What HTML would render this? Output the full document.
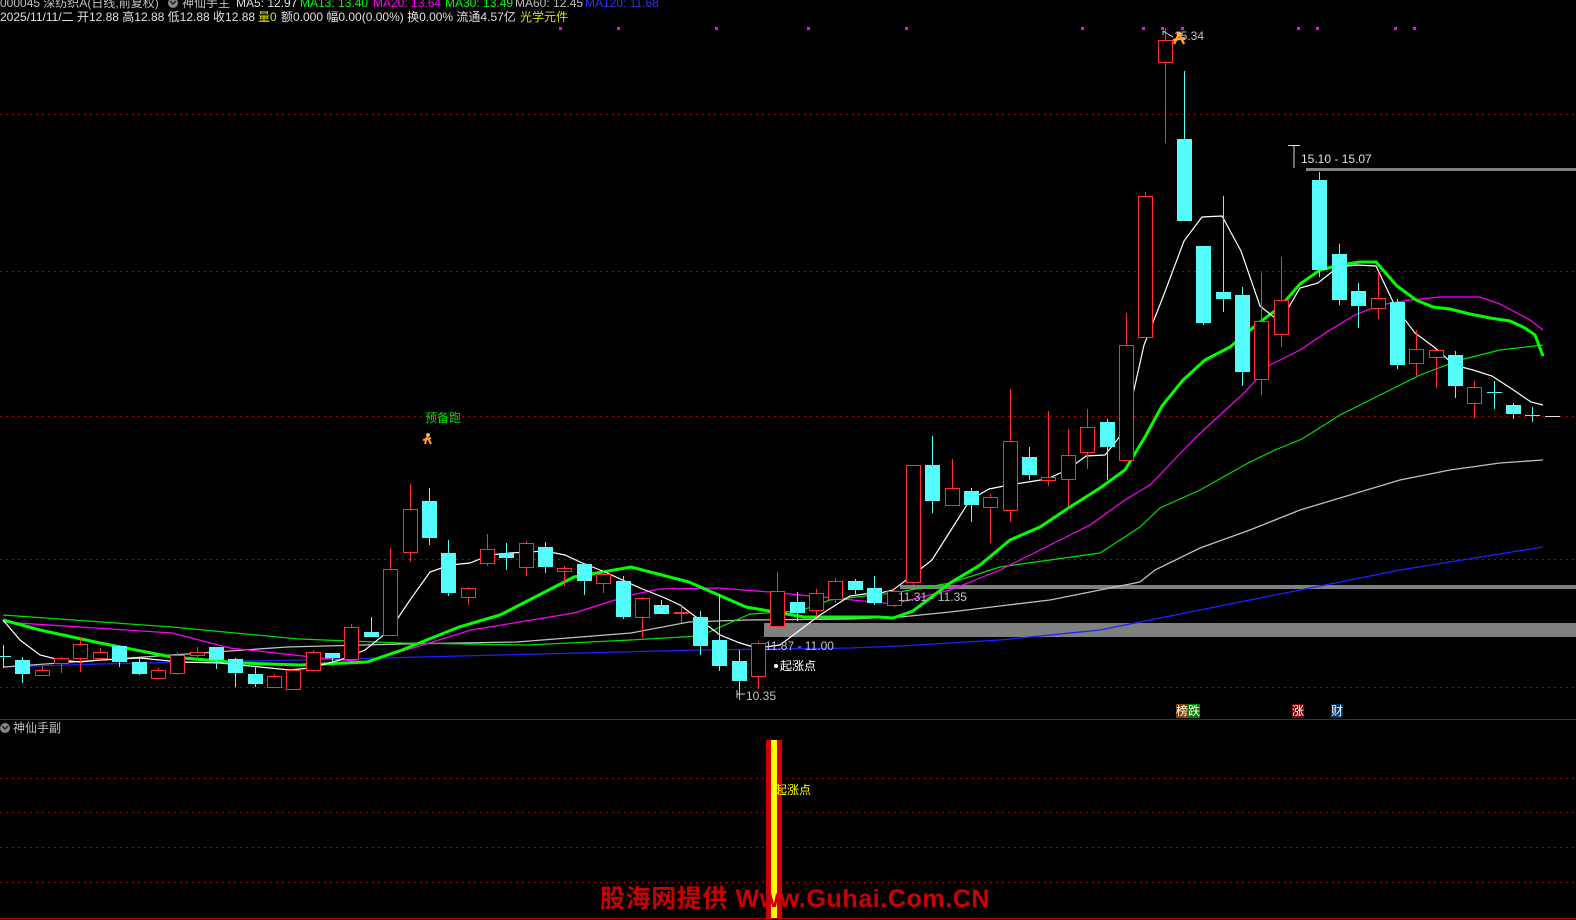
<!DOCTYPE html>
<html><head><meta charset="utf-8">
<style>
html,body{margin:0;padding:0;background:#000;width:1576px;height:920px;overflow:hidden}
body{position:relative;font-family:"Liberation Sans","Noto Sans CJK SC",sans-serif;font-size:12px}
.t{position:absolute;white-space:nowrap;line-height:14px}
svg{position:absolute;left:0;top:0}
</style></head><body>
<svg id="s" width="1576" height="920" xmlns="http://www.w3.org/2000/svg" shape-rendering="crispEdges">
<g stroke="#b00000" stroke-width="1" stroke-dasharray="2,4">
<line x1="0" y1="114.5" x2="1576" y2="114.5"/>
<line x1="0" y1="271.5" x2="1576" y2="271.5"/>
<line x1="0" y1="416.5" x2="1576" y2="416.5"/>
<line x1="0" y1="559.5" x2="1576" y2="559.5"/>
<line x1="0" y1="687.5" x2="1576" y2="687.5"/>
<line x1="0" y1="778.5" x2="1576" y2="778.5"/>
<line x1="0" y1="812.5" x2="1576" y2="812.5"/>
<line x1="0" y1="847.5" x2="1576" y2="847.5"/>
<line x1="0" y1="882.5" x2="1576" y2="882.5"/>
</g>
<line x1="0" y1="719.5" x2="1576" y2="719.5" stroke="#b00000"/>
<line x1="0" y1="918.5" x2="1576" y2="918.5" stroke="#b00000"/>
<rect x="764" y="623" width="812" height="14" fill="#808080"/>
<rect x="900" y="585" width="676" height="4" fill="#808080"/>
<rect x="1306" y="168" width="270" height="3" fill="#808080"/>
<g id="ma" fill="none" shape-rendering="auto"></g>
<g id="cd"></g>
<g fill="#ff00ff">
<rect x="559" y="27" width="3" height="3"/><rect x="617" y="27" width="3" height="3"/><rect x="715" y="27" width="3" height="3"/><rect x="807" y="27" width="3" height="3"/><rect x="905" y="27" width="3" height="3"/><rect x="1081" y="27" width="3" height="3"/><rect x="1142" y="27" width="3" height="3"/><rect x="1161" y="27" width="3" height="3"/><rect x="1181" y="27" width="3" height="3"/><rect x="1297" y="27" width="3" height="3"/><rect x="1316" y="27" width="3" height="3"/><rect x="1394" y="27" width="3" height="3"/><rect x="1413" y="27" width="3" height="3"/>
</g>
<path d="M1288 145.5h12M1294 145v23" stroke="#ddd" fill="none"/>
<path d="M1163 31l0 4M1163 31l10 6" stroke="#ccc" fill="none"/>
<path d="M737 690v8M737 694h8" stroke="#ccc" fill="none"/>
<g shape-rendering="auto">
<circle cx="428" cy="435" r="2" fill="#ffb040"/><path d="M427 437l-2 7M428 438l3 6M423 440l8-2" stroke="#ffa030" stroke-width="2" fill="none"/>
<circle cx="1179" cy="34" r="2.5" fill="#ffb040"/><path d="M1178 36l-4 8M1180 36l4 8M1173 40l12-2" stroke="#ffa030" stroke-width="2.5" fill="none"/>
<circle cx="776" cy="666" r="2" fill="#fff"/>
<circle cx="5" cy="728" r="5" fill="#888"/><path d="M2 726l3 3 3-3" stroke="#222" stroke-width="1.5" fill="none"/>
<circle cx="173" cy="3" r="5" fill="#888"/><path d="M170 1l3 3 3-3" stroke="#222" stroke-width="1.5" fill="none"/>
</g>
<rect x="766" y="740" width="16" height="178" fill="#d00000"/>
<rect x="771" y="740" width="6" height="178" fill="#ffff00"/>
</svg>

<div class="t" style="left:0;top:-4px;color:#c0c0c0">000045 深纺织A(日线,前复权)</div>
<div class="t" style="left:182px;top:-4px;color:#c0c0c0">神仙手主</div>
<div class="t" style="left:236px;top:-4px;color:#e0e0e0">MA5: 12.97</div>
<div class="t" style="left:300px;top:-4px;color:#00ff00">MA13: 13.40</div>
<div class="t" style="left:373px;top:-4px;color:#ff00ff">MA20: 13.64</div>
<div class="t" style="left:445px;top:-4px;color:#00ff00">MA30: 13.49</div>
<div class="t" style="left:515px;top:-4px;color:#c0c0c0">MA60: 12.45</div>
<div class="t" style="left:585px;top:-4px;color:#3030ff">MA120: 11.68</div>

<div class="t" style="left:0;top:10px;color:#e0e0e0">2025/11/11/二 开12.88 高12.88 低12.88 收12.88</div>
<div class="t" style="left:258px;top:10px;color:#e0e000">量0</div>
<div class="t" style="left:281px;top:10px;color:#e0e0e0">额0.000 幅0.00(0.00%) 换0.00% 流通4.57亿</div>
<div class="t" style="left:520px;top:10px;color:#e0e000">光学元件</div>

<div class="t" style="left:425px;top:411px;color:#00e000">预备跑</div>
<div class="t" style="left:1174px;top:29px;color:#c0c0c0">15.34</div>
<div class="t" style="left:1301px;top:152px;color:#e0e0e0">15.10 - 15.07</div>
<div class="t" style="left:898px;top:590px;color:#c0c0c0">11.31 - 11.35</div>
<div class="t" style="left:765px;top:639px;color:#c0c0c0">11.87 - 11.00</div>
<div class="t" style="left:780px;top:659px;color:#fff">起涨点</div>
<div class="t" style="left:746px;top:689px;color:#c0c0c0">10.35</div>

<div class="t" style="left:1176px;top:704px;color:#fff;background:#804000">榜</div>
<div class="t" style="left:1188px;top:704px;color:#fff;background:#008000">跌</div>
<div class="t" style="left:1292px;top:704px;color:#fff;background:#800000">涨</div>
<div class="t" style="left:1331px;top:704px;color:#fff;background:#003060">财</div>

<div class="t" style="left:13px;top:721px;color:#c0c0c0">神仙手副</div>
<div class="t" style="left:775px;top:783px;color:#ffff00">起涨点</div>
<div class="t" style="left:600px;top:884px;color:#cc0000;font-size:25px;line-height:30px;font-weight:bold;letter-spacing:0.6px">股海网提供 Www.Guhai.Com.CN</div>

<script>
var C=[
['x',656,656,645,668],['c',660,674,657,683],['r',670,675,666,676],['r',658,663,657,673],['r',644,658,638,672],
['r',652,658,648,660],['c',646,662,646,667],['c',662,674,658,675],['r',670,678,668,679],['r',655,673,652,675],
['r',652,655,647,660],['c',647,660,647,669],['c',659,673,658,687],['c',674,684,667,687],['r',676,687,674,688],
['r',670,689,668,689],['r',652,670,650,672],['c',653,658,653,662],['r',627,659,624,660],['c',632,637,617,637],
['r',569,635,548,635],['r',509,552,484,562],['c',501,538,488,545],['c',553,593,540,596],['r',588,597,587,605],
['r',549,563,534,566],['c',553,558,543,570],['r',543,567,541,576],['c',547,567,542,573],['r',568,571,566,586],
['c',564,581,563,595],['r',574,583,570,593],['c',581,617,576,619],['r',598,617,597,638],['c',605,614,600,614],
['r',612,613,606,623],['c',617,646,611,655],['c',640,666,594,671],['c',661,681,650,700],['r',643,676,641,689],
['r',591,626,572,626],['c',602,613,592,621],['r',593,610,589,617],['r',581,599,578,603],['c',581,590,579,594],
['c',588,603,576,605],['r',591,605,589,607],['r',465,582,465,585],['c',465,501,436,513],['r',488,505,459,505],
['c',491,505,488,522],['r',497,507,494,543],['r',441,510,389,522],['c',457,475,447,480],['r',477,480,411,486],
['r',455,479,429,506],['r',427,452,409,469],['c',422,447,419,480],['r',345,460,313,461],['r',196,337,192,337],
['r',40,62,28,143],['c',139,221,71,221],['c',246,323,246,325],['c',292,299,196,312],['c',295,372,287,386],
['r',321,379,273,395],['r',300,334,257,347],null,['c',180,270,172,277],['c',254,300,244,305],
['c',291,306,283,328],['r',298,308,272,319],['c',302,365,299,369],['r',349,363,330,376],['r',350,357,350,388],
['c',355,386,351,398],['r',387,403,381,418],['xc',392,392,381,409],['c',405,414,403,419],['xc',415,415,407,422],
['w',416,416,416,416]];
var g=document.getElementById('cd'),h='';
for(var i=0;i<C.length;i++){var d=C[i];if(!d)continue;var x=Math.round(3+i*19.36);var t=d[0];
var col=t=='r'?'#ff3030':(t=='w'?'#e0e0e0':'#54fcfc');
if(t=='x'||t=='xc'||t=='w'){h+='<line x1="'+(x-7)+'" y1="'+(d[1]+.5)+'" x2="'+(x+8)+'" y2="'+(d[1]+.5)+'" stroke="'+col+'"/>';
 if(t!='w')h+='<line x1="'+(x+.5)+'" y1="'+d[3]+'" x2="'+(x+.5)+'" y2="'+d[4]+'" stroke="'+col+'"/>';continue;}
h+='<line x1="'+(x+.5)+'" y1="'+d[3]+'" x2="'+(x+.5)+'" y2="'+d[4]+'" stroke="'+col+'"/>';
if(t=='r')h+='<rect x="'+(x-6.5)+'" y="'+(d[1]+.5)+'" width="14" height="'+Math.max(1,d[2]-d[1])+'" fill="#000" stroke="'+col+'"/>';
else h+='<rect x="'+(x-7)+'" y="'+d[1]+'" width="15" height="'+Math.max(2,d[2]-d[1])+'" fill="'+col+'"/>';}
g.innerHTML=h;
function P(a,c,w){return '<polyline points="'+a+'" stroke="'+c+'" stroke-width="'+w+'"/>';}
var m='';
m+=P('3,667 100,664 300,660 500,655 700,650 850,648 900,646 1000,640 1100,630 1200,610 1300,590 1400,570 1543,547','#2020ff',1.3);
m+=P('3,667 172,655 287,647 402,644 517,642 631,633 689,622 746,620 850,619 900,617 950,612 1000,606 1050,600 1100,590 1140,582 1155,570 1200,548 1250,530 1300,510 1350,495 1400,480 1450,470 1500,463 1543,460','#c0c0c0',1.3);
m+=P('3,615 172,627 299,639 402,643 528,645 631,640 700,636 750,614 800,611 830,600 893,593 950,583 1000,567 1050,560 1100,553 1140,527 1160,508 1200,490 1250,462 1275,450 1302,439 1340,415 1380,395 1420,375 1460,360 1500,350 1543,345','#00e000',1.2);
m+=P('3,622 172,633 230,648 321,658 367,662 413,648 471,630 574,613 631,595 660,589 718,588 769,592 832,598 893,604 950,590 1000,570 1050,545 1090,525 1125,500 1150,485 1194,439 1220,415 1245,392 1270,365 1300,350 1330,330 1355,315 1380,305 1410,300 1440,297 1480,297 1500,304 1530,320 1543,330','#ff00ff',1.2);
m+=P('3,620 40,630 100,643 172,657 241,663 300,665 367,662 402,650 459,627 500,615 574,577 631,567 689,582 746,607 804,617 878,617 893,618 913,611 950,583 980,565 1010,540 1040,527 1070,507 1100,488 1125,470 1145,437 1162,406 1183,380 1205,360 1230,347 1260,322 1280,307 1300,284 1320,270 1340,265 1360,262 1376,262 1397,286 1416,300 1433,307 1450,309 1470,314 1490,318 1510,321 1525,328 1535,335 1543,356','#00ff00',3);
m+=P('3,620 20,640 40,655 60,660 80,662 100,660 140,658 180,662 220,663 260,667 290,670 310,668 340,660 365,650 390,630 410,600 430,572 450,565 470,563 490,555 510,553 545,551 565,555 580,562 605,572 640,588 665,598 680,605 700,620 720,635 740,643 757,648 780,645 800,630 820,615 850,596 865,594 880,593 893,590 913,575 932,560 951,530 970,500 989,489 1009,485 1028,482 1047,479 1067,470 1086,456 1105,455 1125,430 1144,345 1163,297 1184,241 1202,217 1222,216 1241,251 1260,306 1280,322 1300,288 1318,283 1338,267 1357,265 1376,266 1396,308 1415,333 1434,347 1454,365 1473,370 1492,376 1512,389 1531,402 1543,405','#ffffff',1.2);
document.getElementById('ma').innerHTML=m;
</script>
</body></html>
